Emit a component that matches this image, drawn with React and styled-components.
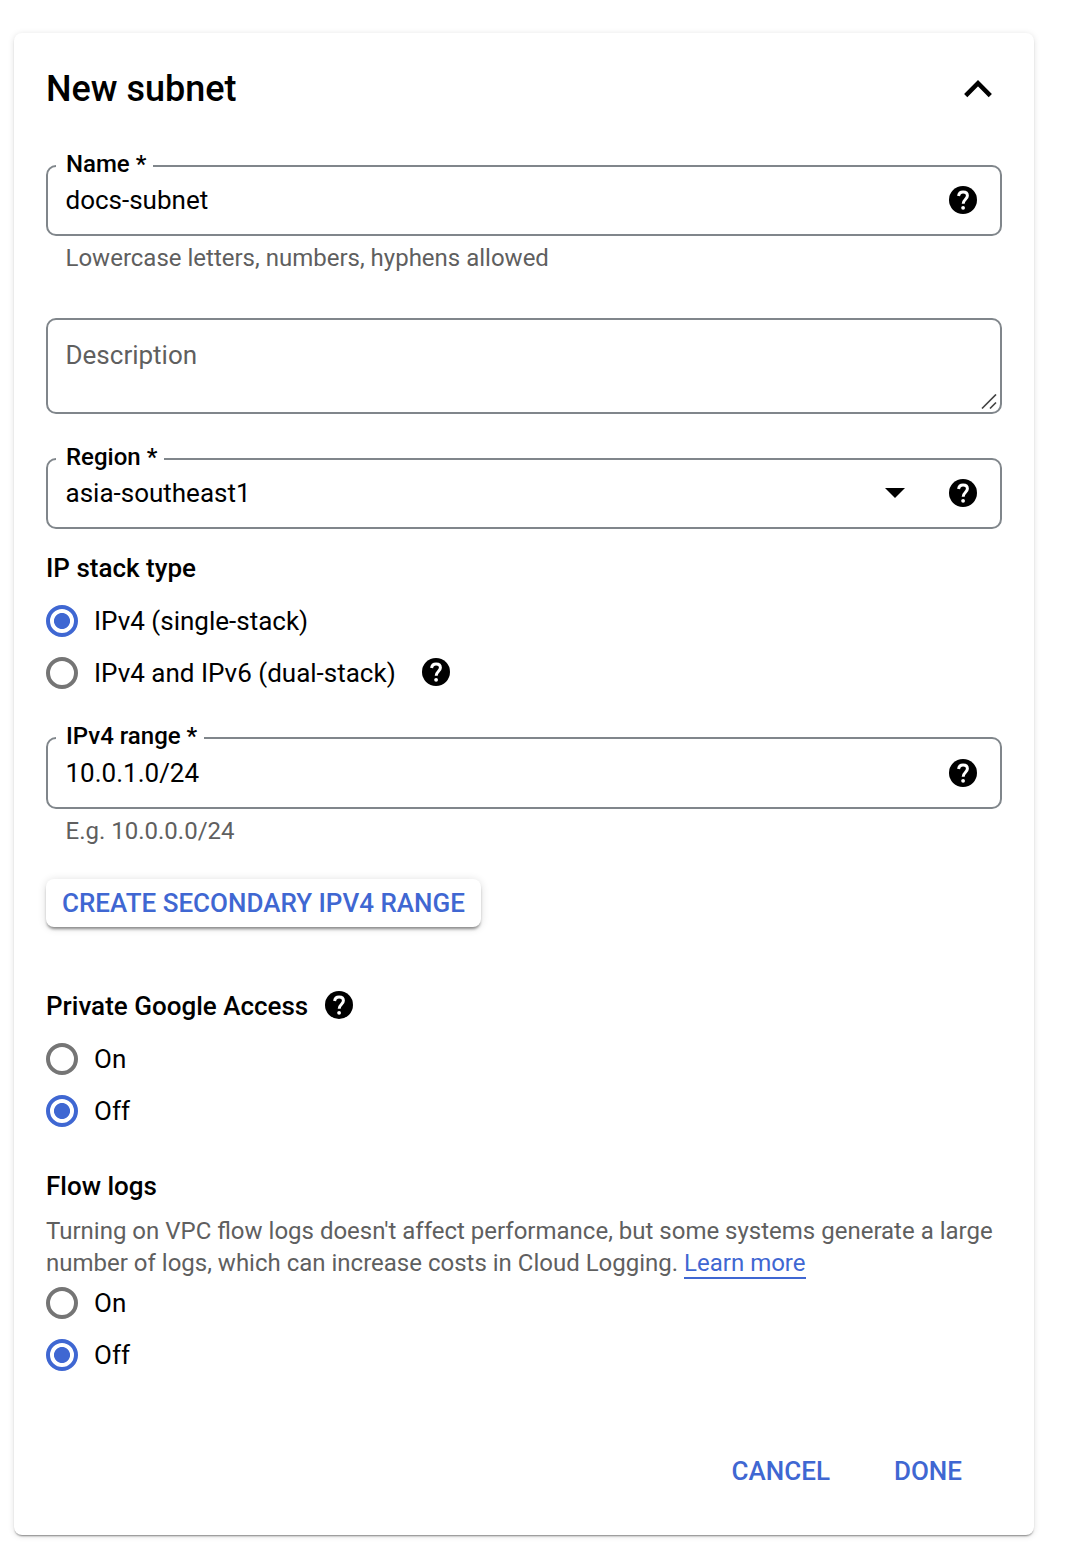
import React, { useState } from "react";
import styled, { createGlobalStyle } from "styled-components";

const BLUE = "#3f67d2";
const OUTLINE = "#80868b";

const GlobalStyle = createGlobalStyle`
  * { box-sizing: border-box; }
  body {
    margin: 0;
    background: #fff;
    color: #000;
    font-family: Roboto, "Liberation Sans", sans-serif;
    font-size: 26px;
  }
`;

const Page = styled.div`
  padding: 33px 36px 21px 14px;
`;

const Card = styled.section`
  display: flex;
  flex-direction: column;
  height: 1502px;
  padding: 32px;
  border-radius: 8px;
  background: #fff;
  box-shadow: 0 2px 2px -1px rgba(0, 0, 0, 0.45), 0 1px 6px rgba(0, 0, 0, 0.13);
`;

const Header = styled.header`
  display: flex;
  align-items: center;
  justify-content: space-between;
  height: 48px;
  padding-right: 10px;
`;

const Title = styled.h2`
  margin: 0;
  font-size: 36px;
  font-weight: 500;
  line-height: 48px;
`;

const IconButton = styled.button`
  display: flex;
  padding: 0;
  border: 0;
  background: none;
  color: inherit;
`;

const Outline = styled.fieldset`
  min-width: 0;
  height: ${(p) => (p.$tall ? 84 : 83)}px;
  margin: ${(p) => p.$top}px 0 0;
  padding: 0 23px 0 8px;
  border: 2px solid ${OUTLINE};
  border-radius: 10px;
`;

const Label = styled.legend`
  padding: 0 7px 4px 10px;
  font-size: 24px;
  font-weight: 500;
  line-height: 22px;
`;

const FieldRow = styled.div`
  display: flex;
  align-items: center;
  gap: 44px;
  height: ${(p) => (p.$tall ? 43 : 42)}px;
  padding-left: 9.5px;
`;

const Value = styled.input`
  flex: 1;
  min-width: 0;
  height: 32px;
  padding: 0;
  border: 0;
  outline: 0;
  background: none;
  color: inherit;
  font: inherit;
  line-height: 32px;
`;

const Hint = styled.p`
  margin: 6px 0 0 19.5px;
  color: #5f5f5f;
  font-size: 24px;
  line-height: 32px;
`;

const DescriptionBox = styled.div`
  display: flex;
  justify-content: space-between;
  height: 96px;
  margin-top: 44px;
  padding: 19px 3px 2px 17.5px;
  border: 2px solid ${OUTLINE};
  border-radius: 10px;
`;

const Description = styled.textarea`
  flex: 1;
  padding: 0;
  border: 0;
  outline: 0;
  resize: none;
  background: none;
  font: inherit;
  line-height: 32px;
  &::placeholder { color: #5f5f5f; opacity: 1; }
`;

const Grip = styled.svg`
  align-self: flex-end;
`;

const GroupTitle = styled.h3`
  display: flex;
  align-items: center;
  gap: 17px;
  height: 32px;
  margin: ${(p) => p.$top}px 0 0;
  font-size: 26px;
  font-weight: 500;
`;

const RadioList = styled.div`
  display: flex;
  flex-direction: column;
  gap: 20px;
  margin-top: ${(p) => p.$top}px;
`;

const RadioRow = styled.div`
  display: flex;
  align-items: center;
  gap: 26px;
  height: 32px;
`;

const RadioLabel = styled.label`
  display: flex;
  align-items: center;
  gap: 16px;
  line-height: 32px;
`;

const RadioInput = styled.input`
  appearance: none;
  width: 32px;
  height: 32px;
  margin: 0;
  border: 4px solid #757575;
  border-radius: 50%;
  &:checked {
    border-color: ${BLUE};
    background: radial-gradient(circle, ${BLUE} 7.6px, transparent 8.4px);
  }
`;

const RaisedButton = styled.button`
  align-self: flex-start;
  height: 48px;
  margin-top: 32px;
  padding: 0 16px;
  border: 0;
  border-radius: 8px;
  background: #fff;
  color: ${BLUE};
  font: 500 26px Roboto, sans-serif;
  white-space: nowrap;
  box-shadow: 0 3px 3px -1px rgba(0, 0, 0, 0.42), 0 1px 8px rgba(0, 0, 0, 0.14);
`;

const Note = styled.p`
  margin: 13px 0 0;
  color: #5f5f5f;
  font-size: 24px;
  line-height: 32px;
  white-space: nowrap;
`;

const Link = styled.a`
  border-bottom: 2px solid ${BLUE};
  color: ${BLUE};
  text-decoration: none;
`;

const Actions = styled.footer`
  display: flex;
  justify-content: flex-end;
  gap: 64px;
  margin-top: 84px;
  padding-right: 40px;
`;

const TextButton = styled.button`
  padding: 0;
  border: 0;
  background: none;
  color: ${BLUE};
  font: 500 26px/32px Roboto, sans-serif;
`;

const HelpSvg = styled.svg`
  display: block;
  flex: none;
  margin-bottom: ${(p) => (p.$raised ? 2 : 0)}px;
`;

function Help({ raised }) {
  return (
    <HelpSvg $raised={raised} width="28" height="28" viewBox="0 0 28 28">
      <circle cx="14" cy="14" r="14" />
      <path
        d="M9.6 10C9.9 7.5 11.6 6 14.1 6c2.6 0 4.3 1.5 4.3 3.8 0 3.3-4.2 3.7-4.2 8"
        fill="none"
        stroke="#fff"
        strokeWidth="3"
      />
      <circle cx="14.1" cy="21.8" r="1.9" fill="#fff" />
    </HelpSvg>
  );
}

function Field({ label, value, top, select, tall }) {
  return (
    <Outline $top={top} $tall={tall}>
      <Label>{label} *</Label>
      <FieldRow $tall={tall}>
        <Value defaultValue={value} aria-label={label} readOnly={select} />
        {select && (
          <svg width="20" height="10" viewBox="0 0 20 10">
            <path d="M0 0h20L10 10z" />
          </svg>
        )}
        <Help />
      </FieldRow>
    </Outline>
  );
}

function Radios({ name, options, initial, top }) {
  const [picked, setPicked] = useState(initial);
  return (
    <RadioList $top={top}>
      {options.map(({ text, help }) => (
        <RadioRow key={text}>
          <RadioLabel>
            <RadioInput type="radio" name={name} checked={picked === text} onChange={() => setPicked(text)} />
            {text}
          </RadioLabel>
          {help && <Help raised />}
        </RadioRow>
      ))}
    </RadioList>
  );
}

const STACKS = [{ text: "IPv4 (single-stack)" }, { text: "IPv4 and IPv6 (dual-stack)", help: true }];
const ON_OFF = [{ text: "On" }, { text: "Off" }];

export default function App() {
  return (
    <Page>
      <GlobalStyle />
      <Card>
        <Header>
          <Title>New subnet</Title>
          <IconButton aria-label="Collapse">
            <svg width="28" height="18" viewBox="0 0 28 18">
              <path d="M1.7 15.6 14 3.2l12.3 12.4" fill="none" stroke="#000" strokeWidth="4.5" />
            </svg>
          </IconButton>
        </Header>
        <Field label="Name" value="docs-subnet" top={40} />
        <Hint>Lowercase letters, numbers, hyphens allowed</Hint>
        <DescriptionBox>
          <Description placeholder="Description" />
          <Grip width="16" height="16" viewBox="0 0 16 16">
            <path d="M1 14.5 15 .5M9 14.5l6-6" fill="none" stroke="#444" strokeWidth="1.7" />
          </Grip>
        </DescriptionBox>
        <Field label="Region" value="asia-southeast1" top={32} select />
        <GroupTitle $top={23}>IP stack type</GroupTitle>
        <Radios name="stack" options={STACKS} initial="IPv4 (single-stack)" top={21} />
        <Field label="IPv4 range" value="10.0.1.0/24" top={36} tall />
        <Hint>E.g. 10.0.0.0/24</Hint>
        <RaisedButton>CREATE SECONDARY IPV4 RANGE</RaisedButton>
        <GroupTitle $top={63}>
          Private Google Access <Help raised />
        </GroupTitle>
        <Radios name="access" options={ON_OFF} initial="Off" top={21} />
        <GroupTitle $top={43}>Flow logs</GroupTitle>
        <Note>
          Turning on VPC flow logs doesn't affect performance, but some systems generate a large
          <br />
          number of logs, which can increase costs in Cloud Logging. <Link href="#">Learn more</Link>
        </Note>
        <Radios name="logs" options={ON_OFF} initial="Off" top={8} />
        <Actions>
          <TextButton>CANCEL</TextButton>
          <TextButton>DONE</TextButton>
        </Actions>
      </Card>
    </Page>
  );
}
